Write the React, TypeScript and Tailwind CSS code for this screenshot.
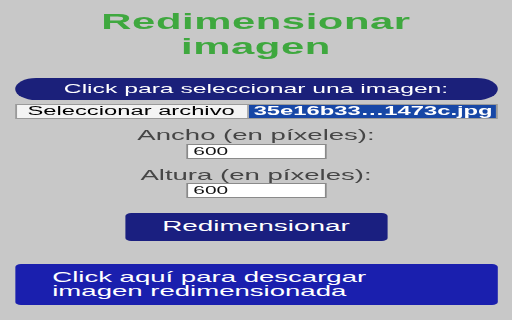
export default function App() {
  return (
    <div className="w-[512px] h-[320px] overflow-hidden bg-[#c8c8c8] font-['Liberation_Sans',Arial,sans-serif]">
      {/* the page is drawn narrow and widened, as in the stretched screenshot */}
      <div className="w-[269.5px] origin-top-left scale-x-[1.9] flex flex-col">
        <h1 className="pt-[10px] text-center text-[22px] leading-[24.5px] tracking-[0.3px] font-bold text-[#3fa83f]">
          Redimensionar
          <br />
          imagen
        </h1>

        <div className="mt-[19px] mx-[7.5px] h-[22px] rounded-full bg-[#1b207a] flex items-center justify-center text-white text-[13px]">
          Click para seleccionar una imagen:
        </div>

        <div className="mt-[4px] mx-[7.5px] h-[15px] flex border border-[#9a9a9a] text-[12.5px] leading-[13px]">
          <span className="w-[122px] bg-[#f4f4f4] text-black text-center border-r border-[#b0b0b0]">
            Seleccionar archivo
          </span>
          <span className="flex-1 bg-[#1747a6] text-white font-bold pl-[3px]">
            35e16b33…1473c.jpg
          </span>
        </div>

        <label className="mt-[8px] text-center text-[14.5px] leading-[16px] text-[#464646]">
          Ancho (en píxeles):
        </label>
        <input
          readOnly
          value="600"
          className="mt-[0.5px] mx-auto w-[74px] h-[15px] border border-[#8a8a8a] bg-white pl-[3px] text-[11px] leading-[13px] text-[#111] outline-none"
        />

        <label className="mt-[8px] text-center text-[14.5px] leading-[16px] text-[#464646]">
          Altura (en píxeles):
        </label>
        <input
          readOnly
          value="600"
          className="mx-auto w-[74px] h-[15px] border border-[#8a8a8a] bg-white pl-[3px] text-[11px] leading-[13px] text-[#111] outline-none"
        />

        <button className="mt-[15px] mx-auto w-[138px] h-[28px] rounded-[3px] bg-[#1a1f80] text-white text-[14.7px]">
          Redimensionar
        </button>

        <div className="mt-[23px] mx-[7.5px] h-[41px] rounded-[3px] bg-[#1a1fae] pt-[6px] px-[20px] text-white text-[14.5px] leading-[14.5px]">
          Click aquí para descargar
          <br />
          imagen redimensionada
        </div>
      </div>
    </div>
  );
}
